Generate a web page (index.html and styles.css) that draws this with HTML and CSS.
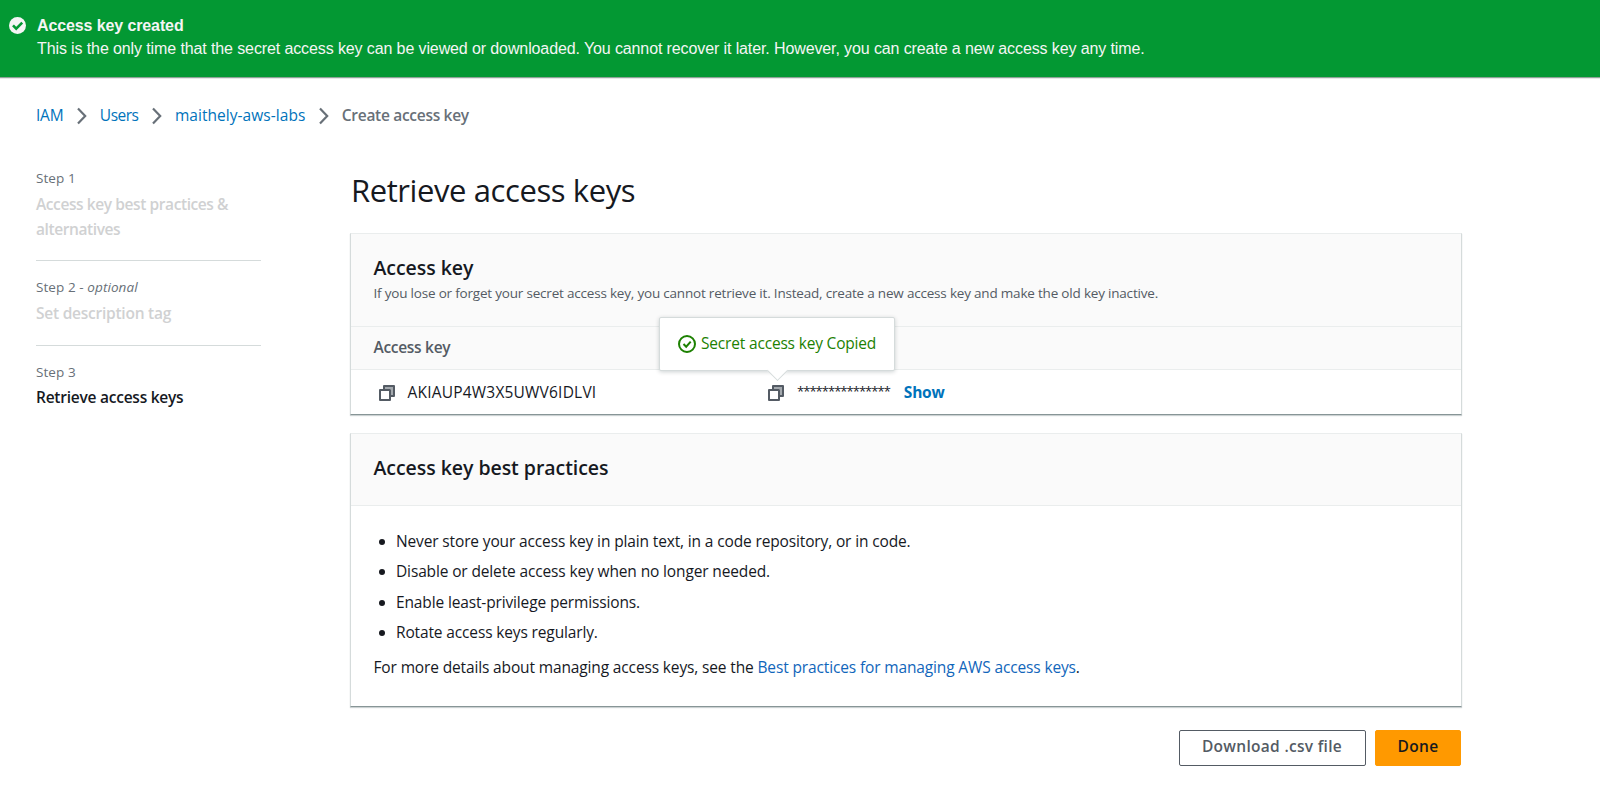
FILE: index.html
```html
<!DOCTYPE html>
<html lang="en">
<head>
<meta charset="utf-8">
<title>Create access key</title>
<link rel="stylesheet" href="styles.css">
</head>
<body>
<svg class="defs" aria-hidden="true">
  <symbol id="chevron" viewBox="0 0 10 18"><path d="M1 1.500l7.200 7.500L1 16.500" fill="none" stroke="currentColor" stroke-width="2.2"/></symbol>
  <symbol id="copy" viewBox="0 0 16 16"><path d="M5 4V1h10v10h-3V4z" fill="#a4a9ae"/><path d="M5 5V1h10v10h-4M1 5h10v10H1z" fill="none" stroke="currentColor" stroke-width="2" stroke-linejoin="round"/></symbol>
</svg>
<header class="flash">
  <svg class="flash-icon" viewBox="0 0 17 17"><circle cx="8.5" cy="8.5" r="8.5" fill="#f5f5f5"/><path d="M4 8.400l3.200 3.200 6-6" fill="none" stroke="#039833" stroke-width="2.6"/></svg>
  <div>
    <div class="flash-title">Access key created</div>
    <div class="flash-text">This is the only time that the secret access key can be viewed or downloaded. You cannot recover it later. However, you can create a new access key any time.</div>
  </div>
</header>
<nav class="crumbs">
  <a class="crumb-iam">IAM</a><svg><use href="#chevron"/></svg>
  <a class="crumb-users">Users</a><svg><use href="#chevron"/></svg>
  <a class="crumb-name">maithely-aws-labs</a><svg><use href="#chevron"/></svg>
  <b class="crumb-current">Create access key</b>
</nav>
<div class="layout">
  <aside class="steps">
    <div class="step"><div class="step-no">Step 1</div><div class="step-name wrapped">Access key best practices &amp;<br>alternatives</div></div>
    <div class="step"><div class="step-no">Step 2 - <i>optional</i></div><div class="step-name">Set description tag</div></div>
    <div class="step"><div class="step-no">Step 3</div><div class="step-name current">Retrieve access keys</div></div>
  </aside>
  <main class="main">
    <h1>Retrieve access keys</h1>
    <section class="card keys">
      <div class="card-head">
        <h2>Access key</h2>
        <p class="desc">If you lose or forget your secret access key, you cannot retrieve it. Instead, create a new access key and make the old key inactive.</p>
      </div>
      <div class="columns"><span>Access key</span></div>
      <div class="row">
        <div class="cell"><svg class="copy"><use href="#copy"/></svg><span class="key">AKIAUP4W3X5UWV6IDLVI</span></div>
        <div class="cell">
          <span class="copy-wrap"><svg class="copy"><use href="#copy"/></svg>
            <span class="tip"><svg viewBox="0 0 18 18"><circle cx="9" cy="9" r="8" fill="none" stroke="#1d8102" stroke-width="2"/><path d="M5.500 9l2.700 2.700 4.500-5" fill="none" stroke="#1d8102" stroke-width="2"/></svg><span>Secret access key Copied</span></span>
          </span>
          <span class="stars">***************</span><a class="show">Show</a>
        </div>
      </div>
    </section>
    <section class="card practices">
      <div class="card-head"><h2>Access key best practices</h2></div>
      <div class="body">
        <ul>
          <li>Never store your access key in plain text, in a code repository, or in code.</li>
          <li>Disable or delete access key when no longer needed.</li>
          <li>Enable least-privilege permissions.</li>
          <li>Rotate access keys regularly.</li>
        </ul>
        <p class="more">For more details about managing access keys, see the <a>Best practices for managing AWS access keys</a>.</p>
      </div>
    </section>
    <div class="actions"><button class="btn">Download .csv file</button><button class="btn primary">Done</button></div>
  </main>
</div>
</body>
</html>
```
FILE: styles.css
```css
* { box-sizing: border-box; }
body { margin: 0; background: #fff; color: #16191f; font: 15.5px/25px "Open Sans", "Noto Sans", sans-serif; letter-spacing: -0.24px; }
h1, h2, p, ul { margin: 0; padding: 0; }
svg { display: block; flex: none; }
a { color: #0073bb; }
.defs { position: absolute; width: 0; height: 0; }

.flash { display: flex; height: 78px; padding: 14px 0 0 8.5px; gap: 11.5px; background: #039833; border-bottom: 1px solid #8fa397; box-shadow: 0 1px 0 #e6e8e8; color: #f5f5f5; font: 16px/23px "Liberation Sans", Arial, sans-serif; letter-spacing: -0.111px; }
.flash-icon { width: 17px; height: 17px; margin-top: 3px; }
.flash-title { font-weight: 700; }

.crumbs { display: flex; align-items: center; height: 25px; margin: 25px 0 0 36px; white-space: nowrap; }
.crumbs svg { width: 10px; height: 18px; margin: 0 12.500px 0 14px; color: #687078; }
.crumb-users { letter-spacing: -0.5px; }
.crumb-name { letter-spacing: 0.04px; }
.crumb-current { color: #687078; font-weight: 600; letter-spacing: -0.3px; }

.layout { display: flex; padding: 37px 0 0 36px; }
.steps { width: 225px; margin-right: 89px; }
.step { height: 85px; padding-top: 14px; border-bottom: 1px solid #d5dbdb; white-space: nowrap; }
.step:first-child { height: 96px; padding-top: 1px; }
.step:last-child { border: 0; }
.step-no { color: #687078; font-size: 13.5px; line-height: 25px; margin-bottom: 1px; letter-spacing: 0.08px; }
.step:last-child .step-no { margin-bottom: 0; }
.step-name { color: #d0d1d2; font-weight: 600; }
.step-name.wrapped { letter-spacing: -0.41px; }
.step-name.current { color: #16191f; }

.main { width: 1112px; }
h1 { font-size: 31px; font-weight: 400; line-height: 40px; margin: 5px 0 23px 1px; letter-spacing: -0.41px; }
.card { border: 1px solid #d5dbdb; border-top-color: #eaeded; border-bottom-color: #879596; box-shadow: 0 1px 1px rgba(0,28,36,.2); }
.card-head { background: #fafafa; border-bottom: 1px solid #eaeded; padding-left: 22.5px; }
h2 { font-size: 19.5px; font-weight: 600; line-height: 26px; letter-spacing: -0.05px; }
.keys { height: 182px; margin-bottom: 18px; }
.keys .card-head { height: 93px; padding-top: 21px; }
.desc { font-size: 13.5px; line-height: 24px; color: #545b64; white-space: nowrap; letter-spacing: -0.198px; }
.columns { height: 43px; padding: 8px 0 0 22.5px; background: #fafafa; border-bottom: 1px solid #eaeded; color: #545b64; font-weight: 600; letter-spacing: -0.3px; }
.row { display: grid; grid-template-columns: 389px 1fr; padding: 10px 0 0 28px; }
.cell { display: flex; align-items: center; height: 24px; }
.copy { width: 16px; height: 16px; color: #545b64; position: relative; top: 1px; }
.key { margin-left: 12.5px; letter-spacing: 0.2px; }
.copy-wrap { position: relative; }
.tip { position: absolute; left: -109px; top: -67px; width: 236px; height: 54px; display: flex; align-items: center; padding: 0 0 1px 18px; gap: 5px; background: #fff; border: 1px solid #d5dbdb; border-radius: 2px; box-shadow: 0 1px 4px rgba(0,28,36,.2); color: #1d8102; white-space: nowrap; letter-spacing: -0.18px; }
.tip svg { width: 18px; height: 18px; }
.tip::after { content: ""; position: absolute; left: 110px; bottom: -8px; width: 14px; height: 14px; background: #fff; border: solid #d5dbdb; border-width: 0 1px 1px 0; transform: rotate(45deg); }
.stars { margin: 0 0 2px 13px; font-size: 13px; letter-spacing: -0.97px; }
.show { margin-left: 14px; font-weight: 700; }
.practices { height: 274px; margin-bottom: 23px; }
.practices .card-head { height: 72px; padding-top: 21px; }
.body { padding: 20px 22.5px; white-space: nowrap; letter-spacing: -0.14px; }
ul { list-style: none; }
li { position: relative; height: 30.3px; line-height: 30px; padding-left: 22.5px; }
li::before { content: ""; position: absolute; left: 5px; top: 13px; width: 6px; height: 6px; border-radius: 50%; background: #16191f; }
.more { line-height: 30px; margin-top: 5px; }
.more a { color: #1166bb; }
.actions { display: flex; justify-content: flex-end; gap: 9px; padding-right: 1px; }
.btn { width: 187px; height: 36px; padding: 0 1px 4px 0; border: 1px solid #545b64; border-radius: 2px; background: #fff; color: #545b64; font: 600 15.5px "Open Sans", sans-serif; letter-spacing: 0.3px; }
.primary { width: 86px; padding-right: 0; border-color: #ff9900; background: #ff9900; color: #16191f; }
```
